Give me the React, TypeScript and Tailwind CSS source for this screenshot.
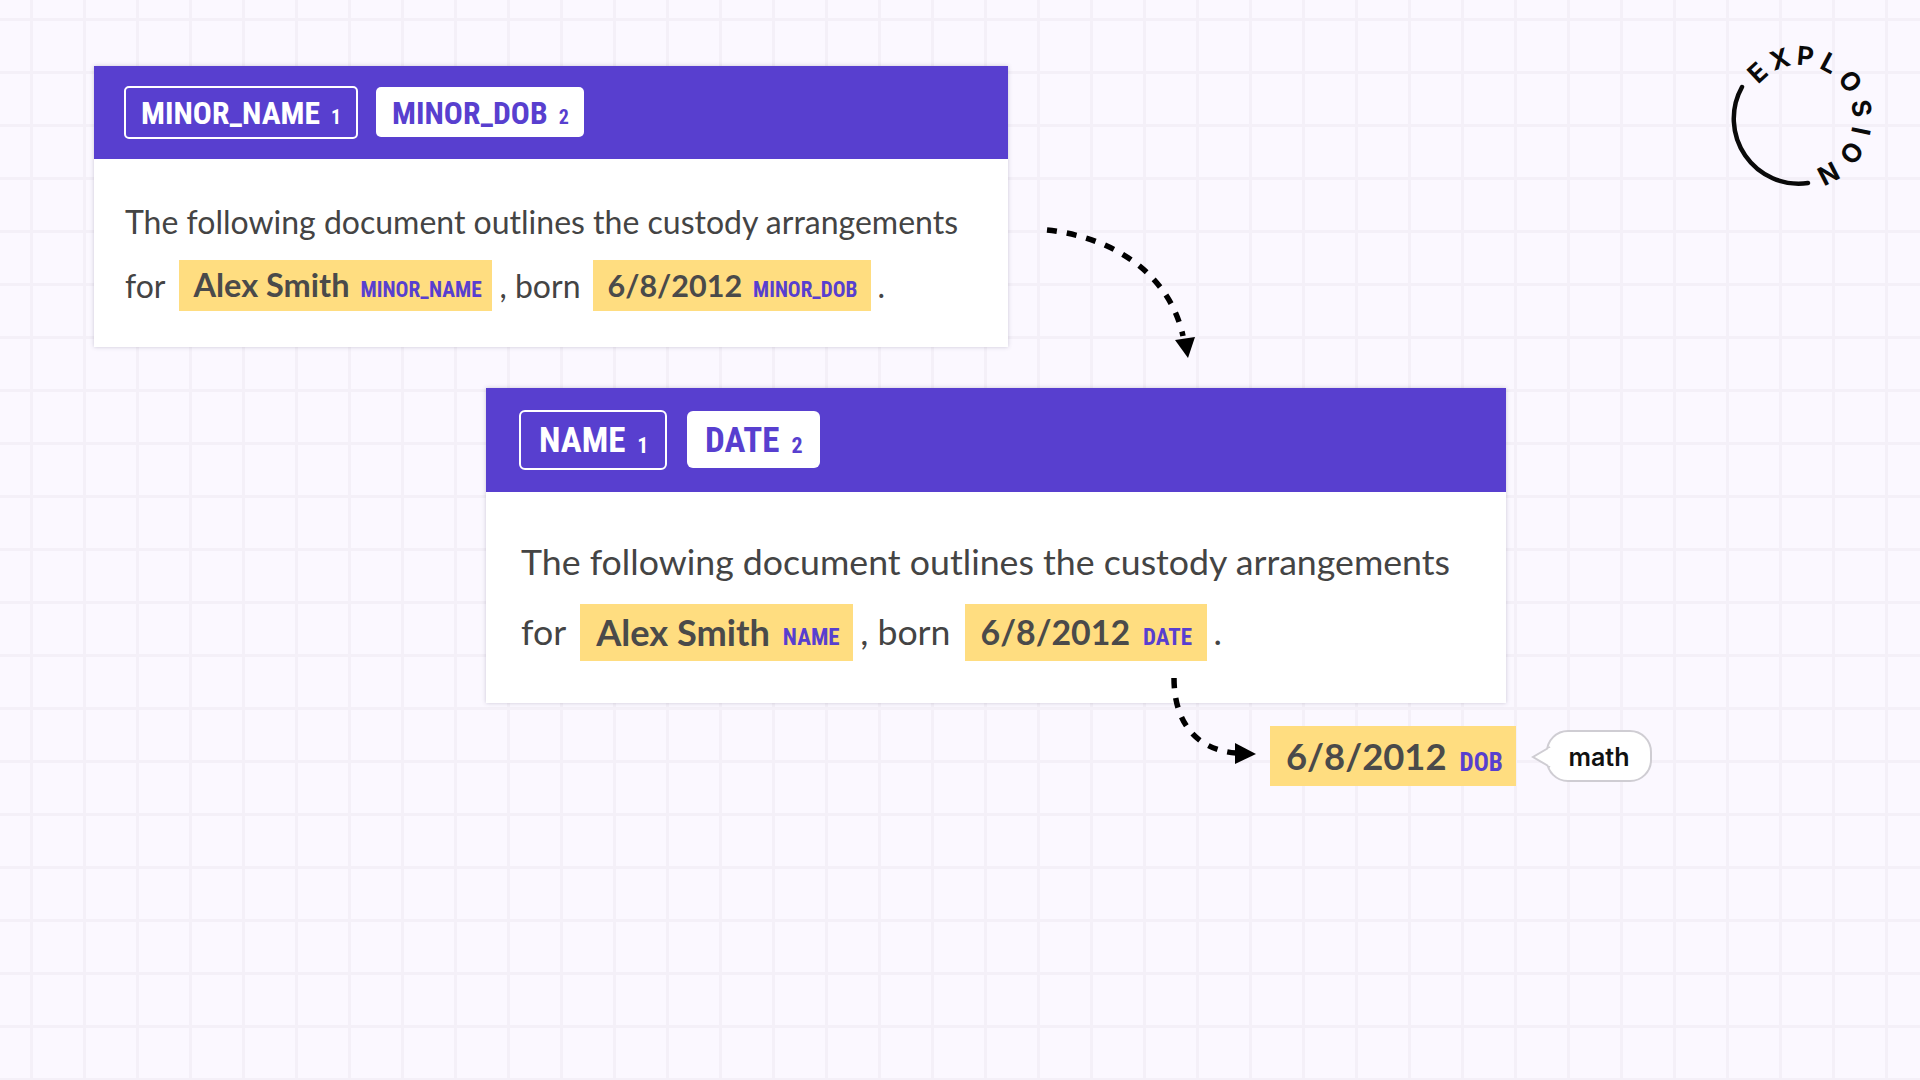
import type { FC } from 'react';
import React from 'react';

const LOGO_LETTERS: [string, number][] = [
  ['E', -43],
  ['X', -19],
  ['P', 5],
  ['L', 28],
  ['O', 54],
  ['S', 81],
  ['I', 102],
  ['O', 124],
  ['N', 153],
];

const Logo: FC = () => (
  <svg className="absolute left-[1720px] top-[30px]" width="170" height="170" viewBox="1720 30 170 170">
    <path d="M1742 87 A65 65 0 0 0 1808 183" fill="none" stroke="#0a0a0a" strokeWidth="4.5" strokeLinecap="round" />
    {LOGO_LETTERS.map(([letter, angle], i) => (
      <text
        key={i}
        x="1800"
        y="65"
        textAnchor="middle"
        transform={`rotate(${angle} 1800 118)`}
        fontFamily="Inter, sans-serif"
        fontWeight="700"
        fontSize="26"
        fill="#0a0a0a"
      >
        {letter}
      </text>
    ))}
  </svg>
);

const Arrows: FC = () => (
  <svg className="absolute left-0 top-0" width="1920" height="1080" viewBox="0 0 1920 1080" fill="none">
    <path d="M1047 230 C1105 236 1168 268 1183 336" stroke="#000" strokeWidth="5.5" strokeDasharray="10 10" />
    <path d="M1188 358 L1175 340 L1195 337 Z" fill="#000" />
    <path d="M1174 678 C1174 722 1196 750 1236 753" stroke="#000" strokeWidth="5.5" strokeDasharray="10 10" />
    <path d="M1256 754 L1235 743 L1235 764 Z" fill="#000" />
  </svg>
);

const condensed = "font-['Roboto',sans-serif] font-bold [font-stretch:75%]";

const SmallCard: FC = () => (
  <div className="ml-[94px] h-[281px] w-[914px] bg-white shadow-[0_0_4px_rgba(60,50,90,0.25)]">
    <div className="flex h-[93px] items-center gap-[18px] bg-[#583fcf] pl-[30px]">
      <div className={`mb-[1px] flex h-[53px] w-[234px] items-center rounded-[5px] border-2 border-white pl-[15px] text-white ${condensed}`}>
        <span className="mt-[3px] text-[31.6px]">MINOR_NAME</span>
        <span className="ml-[11px] mt-[10px] text-[20px]">1</span>
      </div>
      <div className={`mb-[1px] flex h-[50px] w-[208px] items-center rounded-[5px] bg-white pl-[16px] text-[#583fcf] ${condensed}`}>
        <span className="mt-[3px] text-[31.6px]">MINOR_DOB</span>
        <span className="ml-[11px] mt-[10px] text-[20px]">2</span>
      </div>
    </div>
    <div className="pl-[31px] pt-[39px] font-['Lato',sans-serif] text-[32px] text-[#444]">
      <p className="h-[47px] leading-[47px]">The following document outlines the custody arrangements</p>
      <div className="mt-[15px] flex h-[51px] items-center">
        <span>for</span>
        <span className="ml-[14px] flex h-[51px] w-[313px] items-center bg-[#ffdd80] pl-[14px] text-[32.5px] font-bold text-[#4a4a4a]">
          Alex Smith
          <span className={`ml-[11px] mt-[9px] text-[21.4px] text-[#583fcf] ${condensed}`}>MINOR_NAME</span>
        </span>
        <span className="ml-[7px]">, born</span>
        <span className="ml-[12px] flex h-[51px] w-[278px] items-center bg-[#ffdd80] pl-[15px] text-[30.5px] font-bold text-[#4a4a4a]">
          6/8/2012
          <span className={`ml-[11px] mt-[9px] text-[21.2px] text-[#583fcf] ${condensed}`}>MINOR_DOB</span>
        </span>
        <span className="ml-[7px]">.</span>
      </div>
    </div>
  </div>
);

const LargeCard: FC = () => (
  <div className="ml-[486px] mt-[41px] h-[315px] w-[1020px] bg-white shadow-[0_0_4px_rgba(60,50,90,0.25)]">
    <div className="flex h-[104px] items-center gap-[20px] bg-[#583fcf] pl-[33px]">
      <div className={`mb-[1px] flex h-[60px] w-[148px] items-center rounded-[6px] border-2 border-white pl-[18px] text-white ${condensed}`}>
        <span className="mt-[3px] text-[35px]">NAME</span>
        <span className="ml-[12px] mt-[11px] text-[22px]">1</span>
      </div>
      <div className={`mb-[1px] flex h-[57px] w-[133px] items-center rounded-[6px] bg-white pl-[18px] text-[#583fcf] ${condensed}`}>
        <span className="mt-[3px] text-[35px]">DATE</span>
        <span className="ml-[12px] mt-[11px] text-[22px]">2</span>
      </div>
    </div>
    <div className="pl-[35px] pt-[44px] font-['Lato',sans-serif] text-[35.7px] text-[#444]">
      <p className="h-[52px] leading-[52px]">The following document outlines the custody arrangements</p>
      <div className="mt-[16px] flex h-[57px] items-center">
        <span className="mb-[2px]">for</span>
        <span className="ml-[14px] flex h-[57px] w-[273px] items-center bg-[#ffdd80] pl-[16px] text-[36.2px] font-bold text-[#4a4a4a]">
          Alex Smith
          <span className={`ml-[13px] mt-[11px] text-[23px] text-[#583fcf] ${condensed}`}>NAME</span>
        </span>
        <span className="mb-[2px] ml-[7px]">, born</span>
        <span className="ml-[14px] flex h-[57px] w-[242px] items-center bg-[#ffdd80] pl-[16px] text-[33.9px] font-bold text-[#4a4a4a]">
          6/8/2012
          <span className={`ml-[13px] mt-[11px] text-[23px] text-[#583fcf] ${condensed}`}>DATE</span>
        </span>
        <span className="mb-[2px] ml-[7px]">.</span>
      </div>
    </div>
  </div>
);

const ResultRow: FC = () => (
  <div className="ml-[1270px] mt-[23px] flex items-center">
    <div className="flex h-[60px] w-[246px] items-center bg-[#ffdd80] pl-[16px] font-['Lato',sans-serif] text-[36.4px] font-bold text-[#4a4a4a]">
      6/8/2012
      <span className={`ml-[13px] mt-[13px] text-[25px] text-[#583fcf] ${condensed}`}>DOB</span>
    </div>
    <div className="relative ml-[30px] flex h-[52px] w-[106px] items-center justify-center rounded-[22px] border-2 border-[#cfcdd3] bg-white font-['Inter',sans-serif] text-[25px] font-semibold text-[#111]">
      {/* speech bubble tail sits over the border */}
      <svg className="absolute left-[-17px] top-[13px]" width="20" height="24" viewBox="0 0 20 24">
        <path d="M19 2 L2 12 L19 22" fill="#fff" stroke="#cfcdd3" strokeWidth="2" />
        <rect x="17.5" y="3" width="2.5" height="18" fill="#fff" />
      </svg>
      <span className="relative mt-[3px]">math</span>
    </div>
  </div>
);

const App: FC = () => (
  <div className="relative h-[1080px] w-[1920px] overflow-hidden bg-[#fbf8ff] bg-[linear-gradient(to_right,#f4f0f8_3px,transparent_3px),linear-gradient(to_bottom,#f4f0f8_3px,transparent_3px)] bg-[size:53px_53px] bg-[position:30px_18px] pt-[66px]">
    <SmallCard />
    <LargeCard />
    <ResultRow />
    <Arrows />
    <Logo />
  </div>
);

export default App;
